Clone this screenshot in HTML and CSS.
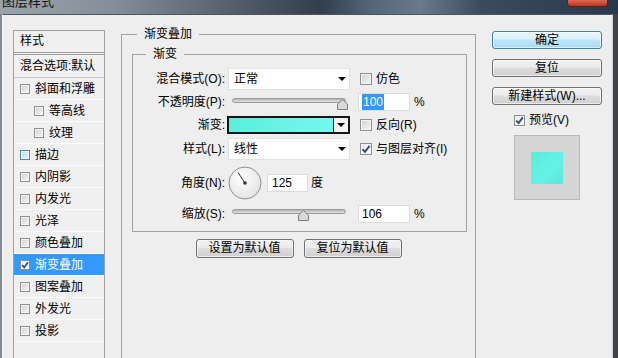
FILE: index.html
```html
<!doctype html>
<html lang="zh-CN">
<head>
    <meta charset="UTF-8" />
    <title>图层样式</title>
    <link rel="stylesheet" href="styles.css">
</head>
<body>
<div class="window">
    <div class="titlebar">
        <span class="title">图层样式</span>
        <span class="close"></span>
    </div>
    <div class="dialog">
        <aside class="styles">
            <div class="hd">样式</div>
            <div class="opt">混合选项:默认</div>
            <ul class="fx">
                <li><span class="cb"></span>斜面和浮雕</li>
                <li class="sub"><span class="cb"></span>等高线</li>
                <li class="sub"><span class="cb"></span>纹理</li>
                <li><span class="cb hover"></span>描边</li>
                <li><span class="cb"></span>内阴影</li>
                <li><span class="cb"></span>内发光</li>
                <li><span class="cb"></span>光泽</li>
                <li><span class="cb"></span>颜色叠加</li>
                <li class="active"><span class="cb on"><svg width="8" height="8" viewBox="0 0 8 8"><path d="M1 4.2 L3.2 6.4 L7 1.2" fill="none" stroke="#2d4b8e" stroke-width="1.7"/></svg></span>渐变叠加</li>
                <li><span class="cb"></span>图案叠加</li>
                <li><span class="cb"></span>外发光</li>
                <li><span class="cb"></span>投影</li>
            </ul>
        </aside>

        <section class="main">
            <fieldset class="outer">
                <legend>渐变叠加</legend>
                <fieldset class="inner">
                    <legend>渐变</legend>
                    <div class="row r1">
                        <span class="lbl">混合模式(O):</span>
                        <div class="select"><span>正常</span><i class="caret"></i></div>
                        <label class="chk"><span class="cb"></span>仿色</label>
                    </div>
                    <div class="row r2">
                        <span class="lbl">不透明度(P):</span>
                        <div class="slider">
                            <div class="track"></div>
                            <svg class="thumb" style="left:109px" width="11" height="11" viewBox="0 0 11 11"><polygon points="5.5,0.5 10.5,5 10.5,10.5 0.5,10.5 0.5,5" fill="#d8d8d8" stroke="#7f7f7f"/></svg>
                        </div>
                        <div class="num"><span class="hl">100</span></div>
                        <span class="unit">%</span>
                    </div>
                    <div class="row r3">
                        <span class="lbl">渐变:</span>
                        <div class="grad"><span class="fill"></span><span class="drop"><i class="caret"></i></span></div>
                        <label class="chk"><span class="cb"></span>反向(R)</label>
                    </div>
                    <div class="row r4">
                        <span class="lbl">样式(L):</span>
                        <div class="select"><span>线性</span><i class="caret"></i></div>
                        <label class="chk"><span class="cb on"><svg width="10" height="10" viewBox="0 0 10 10"><path d="M1.5 5.2 L4 7.8 L8.6 1.8" fill="none" stroke="#2d4b8e" stroke-width="2"/></svg></span>与图层对齐(I)</label>
                    </div>
                    <div class="row r5">
                        <span class="lbl">角度(N):</span>
                        <svg class="dial" width="34" height="34" viewBox="0 0 34 34">
                            <defs>
                                <radialGradient id="dg" cx="40%" cy="35%" r="70%">
                                    <stop offset="0" stop-color="#ffffff"/>
                                    <stop offset="1" stop-color="#e2e2e2"/>
                                </radialGradient>
                            </defs>
                            <circle cx="17" cy="17" r="16" fill="url(#dg)" stroke="#8e8e8e"/>
                            <line x1="17" y1="17" x2="10" y2="6.5" stroke="#333" stroke-width="1"/>
                            <circle cx="17" cy="17" r="1.8" fill="#333"/>
                        </svg>
                        <div class="num short">125</div>
                        <span class="unit deg">度</span>
                    </div>
                    <div class="row r6">
                        <span class="lbl">缩放(S):</span>
                        <div class="slider">
                            <div class="track"></div>
                            <svg class="thumb" style="left:70px" width="11" height="11" viewBox="0 0 11 11"><polygon points="5.5,0.5 10.5,5 10.5,10.5 0.5,10.5 0.5,5" fill="#d8d8d8" stroke="#7f7f7f"/></svg>
                        </div>
                        <div class="num">106</div>
                        <span class="unit">%</span>
                    </div>
                </fieldset>
                <div class="defaults">
                    <button class="btn">设置为默认值</button>
                    <button class="btn">复位为默认值</button>
                </div>
            </fieldset>
        </section>

        <div class="actions">
            <button class="btn ok">确定</button>
            <button class="btn">复位</button>
            <button class="btn">新建样式(W)...</button>
            <label class="chk preview-chk"><span class="cb sm on"><svg width="9" height="9" viewBox="0 0 9 9"><path d="M1.2 4.6 L3.6 7 L7.8 1.4" fill="none" stroke="#2d4b8e" stroke-width="1.9"/></svg></span>预览(V)</label>
            <div class="preview"><span class="swatch"></span></div>
        </div>
    </div>
</div>
</body>
</html>
```

FILE: styles.css
```css
*{
    box-sizing: border-box;
}
body{
    margin: 0;
    font: 12px/16px "Liberation Sans", "Noto Sans CJK SC", sans-serif;
    color: #000;
    background: #2f3b48;
}
.window{
    width: 618px;
    height: 358px;
    overflow: hidden;
    background: linear-gradient(to right, #7f8a94 0, #7f8a94 3px, #3d444c 3px);
}
.titlebar{
    height: 14px;
    display: flex;
    justify-content: space-between;
    overflow: hidden;
    background: linear-gradient(to right, #9ba3ab 0%, #858f99 18%, #4a5561 42%, #323e4b 52%, #56667a 60%, #6a7a8c 68%, #3b4a5d 78%, #2a384b 100%);
}
.title{
    margin: -7px 0 0 2px;
    font-size: 13px;
    line-height: 18px;
    color: #151515;
}
.close{
    width: 41px;
    height: 7px;
    margin-right: 10px;
    background: linear-gradient(#dc6a52, #b9351f);
    border: 1px solid #5c2218;
    border-top: 0;
    border-radius: 0 0 4px 4px;
}
.dialog{
    display: flex;
    margin-left: 2px;
    width: 611px;
    height: 344px;
    padding: 11px 0 0 10px;
    background: #eeeeee;
    border-left: 1px solid #f6f6f6;
    border-top: 1px solid #4a5561;
    border-right: 1px solid #d2d2d2;
}

/* style list */
.styles{
    flex: none;
    width: 92px;
    height: 330px;
    margin-top: 4px;
    border: 1px solid #a0a0a0;
    background: #f0f0f0;
}
.hd{
    height: 24px;
    line-height: 21px;
    padding-left: 6px;
    border-bottom: 3px double #a0a0a0;
}
.opt{
    height: 23px;
    line-height: 22px;
    padding-left: 6px;
    border-bottom: 1px solid #c9c9c9;
}
.fx{
    margin: 0;
    padding: 0;
    list-style: none;
}
.fx li{
    height: 22px;
    display: flex;
    align-items: center;
    gap: 5px;
    padding-left: 6px;
    border-bottom: 1px solid #fbfbfb;
}
.fx li.sub{
    padding-left: 20px;
}
.fx li.active{
    background: #3399ff;
    color: #fff;
}
.fx .cb{
    width: 10px;
    height: 10px;
}

/* checkbox */
.cb{
    flex: none;
    width: 12px;
    height: 12px;
    display: flex;
    align-items: center;
    justify-content: center;
    border: 1px solid #8e8f8f;
    box-shadow: inset 0 0 0 1px #f4f4f4;
    background: linear-gradient(135deg, #cfcfcf, #f7f7f7);
}
.cb.on{
    background: linear-gradient(135deg, #e9e9e9, #ffffff);
}
.cb.hover{
    border-color: #5586a3;
    background: linear-gradient(135deg, #b9dcf2, #e6f4fc);
}
.cb.sm{
    width: 11px;
    height: 11px;
}
.cb svg{
    display: block;
}
.chk{
    display: flex;
    align-items: center;
    gap: 4px;
    margin-left: 10px;
}

/* main group */
.main{
    flex: none;
    width: 355px;
    margin-left: 16px;
}
fieldset{
    margin: 0;
    padding: 0;
    min-width: 0;
    border: 1px solid #a2a2a2;
}
legend{
    padding: 0 7px;
    margin-left: 15px;
    line-height: 16px;
}
.outer{
    height: 340px;
}
.inner{
    margin: 4px 8px 0 10px;
    padding-bottom: 8px;
}
.inner legend{
    margin-left: 13px;
}
.row{
    display: flex;
    align-items: center;
}
.r1{ margin-top: 6px; height: 22px; }
.r2{ height: 24px; }
.r3{ height: 22px; }
.r4{ height: 26px; }
.r5{ height: 42px; }
.r6{ height: 19px; }
.lbl{
    flex: none;
    width: 95px;
    padding-right: 3px;
    text-align: right;
}
.select{
    flex: none;
    width: 122px;
    height: 22px;
    display: flex;
    align-items: center;
    padding: 0 3px 0 5px;
    background: #fff;
    border: 1px solid #e2e2e2;
}
.caret{
    width: 0;
    height: 0;
    margin-left: auto;
    border-left: 4px solid transparent;
    border-right: 4px solid transparent;
    border-top: 4px solid #000;
}
.slider{
    flex: none;
    position: relative;
    width: 122px;
    height: 12px;
    margin-top: 3px;
}
.track{
    margin-left: 4px;
    width: 114px;
    height: 5px;
    border: 1px solid #9a9a9a;
    border-radius: 3px;
    background: linear-gradient(#b2b2b2, #e4e4e4);
}
.thumb{
    position: absolute;
    top: 1px;
}
.num{
    flex: none;
    width: 52px;
    height: 18px;
    margin-left: 8px;
    padding-left: 3px;
    line-height: 16px;
    background: #fff;
    border: 1px solid #dcdcdc;
}
.num.short{
    width: 41px;
    margin-left: 5px;
    padding-left: 4px;
}
.hl{
    display: inline-block;
    padding: 0 1px;
    background: #3399ff;
    color: #fff;
}
.unit{
    margin-left: 4px;
}
.unit.deg{
    margin-left: 3px;
}
.grad{
    flex: none;
    display: flex;
    width: 123px;
    height: 18px;
    margin-left: -1px;
    border: 2px solid #161616;
}
.grad .fill{
    flex: 1;
    background: linear-gradient(to right, #5aeedb, #6af3e6 55%, #72f9ef);
}
.grad .drop{
    width: 15px;
    display: flex;
    align-items: center;
    justify-content: center;
    border-left: 1px solid #161616;
    background: #f3f3f3;
}
.grad .caret{
    margin: 0;
}
.dial{
    flex: none;
    display: block;
}
.defaults{
    display: flex;
    justify-content: center;
    gap: 10px;
    margin-top: 7px;
}

/* buttons */
.btn{
    width: 98px;
    height: 19px;
    padding: 0;
    font: inherit;
    line-height: 17px;
    color: #000;
    border: 1px solid #707070;
    border-radius: 3px;
    background: linear-gradient(#f2f2f2, #ebebeb 45%, #dddddd 50%, #cfcfcf);
    box-shadow: inset 0 0 0 1px rgba(255,255,255,.6);
}
.actions{
    flex: none;
    width: 110px;
    margin: 5px 0 0 16px;
    display: flex;
    flex-direction: column;
}
.actions .btn{
    width: 110px;
    height: 18px;
    line-height: 16px;
    margin-bottom: 10px;
}
.actions .ok{
    border-color: #3c7fb1;
    background: linear-gradient(#eaf6fd, #d9f0fc 45%, #bee6fd 50%, #a7d9f5);
}
.preview-chk{
    height: 14px;
    margin: -2px 0 0 22px;
}
.preview{
    width: 66px;
    height: 65px;
    margin: 8px 0 0 22px;
    display: flex;
    align-items: center;
    justify-content: center;
    border: 1px solid #b8b8b8;
    background: #d5d5d5;
}
.swatch{
    width: 32px;
    height: 32px;
    background: linear-gradient(135deg, #58ecd9, #66f2e6 55%, #5be6da);
}
```
